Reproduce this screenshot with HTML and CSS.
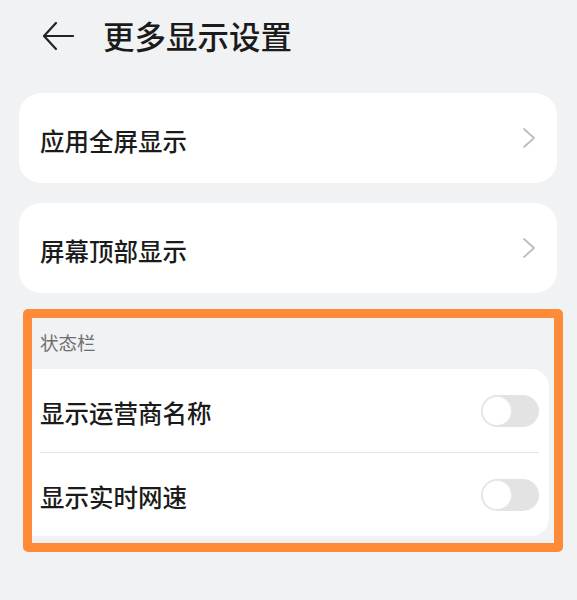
FILE: index.html
```html
<!DOCTYPE html>
<html lang="zh-CN">
<head>
<meta charset="utf-8">
<title>更多显示设置</title>
<link rel="stylesheet" href="styles.css">
</head>
<body>
<div class="page">
  <header class="topbar">
    <svg class="back" width="32" height="30" viewBox="0 0 32 30" aria-hidden="true">
      <polyline points="14,2 2,15 14,28" fill="none" stroke="#222" stroke-width="2.2" stroke-linecap="round" stroke-linejoin="round"/>
      <line x1="2.5" y1="15" x2="31" y2="15" stroke="#222" stroke-width="2.2" stroke-linecap="round"/>
    </svg>
    <h1 class="title">更多显示设置</h1>
  </header>

  <div class="card nav-card">
    <span class="label">应用全屏显示</span>
    <svg class="chev" width="14" height="22" viewBox="0 0 14 22" aria-hidden="true">
      <polyline points="2,2 12,11 2,20" fill="none" stroke="#bdbdbd" stroke-width="1.8" stroke-linecap="round" stroke-linejoin="round"/>
    </svg>
  </div>

  <div class="card nav-card">
    <span class="label">屏幕顶部显示</span>
    <svg class="chev" width="14" height="22" viewBox="0 0 14 22" aria-hidden="true">
      <polyline points="2,2 12,11 2,20" fill="none" stroke="#bdbdbd" stroke-width="1.8" stroke-linecap="round" stroke-linejoin="round"/>
    </svg>
  </div>

  <section class="highlight">
    <div class="group-title">状态栏</div>
    <div class="group-card">
      <div class="row">
        <span class="label">显示运营商名称</span>
        <span class="toggle"><span class="knob"></span></span>
      </div>
      <div class="divider"></div>
      <div class="row">
        <span class="label">显示实时网速</span>
        <span class="toggle"><span class="knob"></span></span>
      </div>
    </div>
  </section>
</div>
</body>
</html>
```

FILE: styles.css
```css
* { box-sizing: border-box; }
html, body {
  margin: 0;
  padding: 0;
  background: #f1f2f4;
  font-family: "Noto Sans CJK SC", "Noto Sans", sans-serif;
  color: #1b1b1b;
}
.page {
  width: 577px;
  height: 600px;
  overflow: hidden;
}
.topbar {
  display: flex;
  align-items: center;
  height: 74px;
  padding-left: 42px;
  padding-bottom: 2px;
}
.back {
  display: block;
  margin-right: 29px;
}
.title {
  margin: 0;
  font-size: 31.5px;
  font-weight: 500;
  color: #1b1b1b;
  line-height: 1;
}
.card {
  background: #ffffff;
  border-radius: 22px;
  margin: 0 20px 0 19px;
}
.nav-card {
  display: flex;
  align-items: center;
  justify-content: space-between;
  height: 90px;
  padding: 0 21px 0 21px;
  margin-top: 20px;
}
.nav-card:first-of-type { margin-top: 19px; }
.label {
  font-size: 24.5px;
  font-weight: 500;
  line-height: 1;
  padding-top: 6px;
  color: #1b1b1b;
}
.chev { display: block; }
.highlight {
  margin: 16px 14px 0 23px;
  border: 9px solid #ff8b38;
  border-radius: 5px;
  background: #f1f2f4;
  padding: 0 5px 7px 0;
}
.group-title {
  height: 51px;
  padding-left: 8px;
  padding-top: 13px;
  font-size: 18.5px;
  color: #6e6e6e;
  line-height: 1.2;
}
.group-card {
  background: #ffffff;
  border-radius: 0 18px 18px 0;
  padding: 0 10px 0 8px;
}
.row {
  display: flex;
  align-items: center;
  justify-content: space-between;
  height: 83px;
}
.divider {
  height: 1px;
  background: #e4e4e4;
}
.toggle {
  position: relative;
  display: block;
  width: 58px;
  height: 32px;
  border-radius: 16px;
  background: #e3e3e3;
}
.knob {
  position: absolute;
  left: 2px;
  top: 2px;
  width: 28px;
  height: 28px;
  border-radius: 50%;
  background: #ffffff;
  box-shadow: 0 0 0 1px #e8e8e8;
}
```
